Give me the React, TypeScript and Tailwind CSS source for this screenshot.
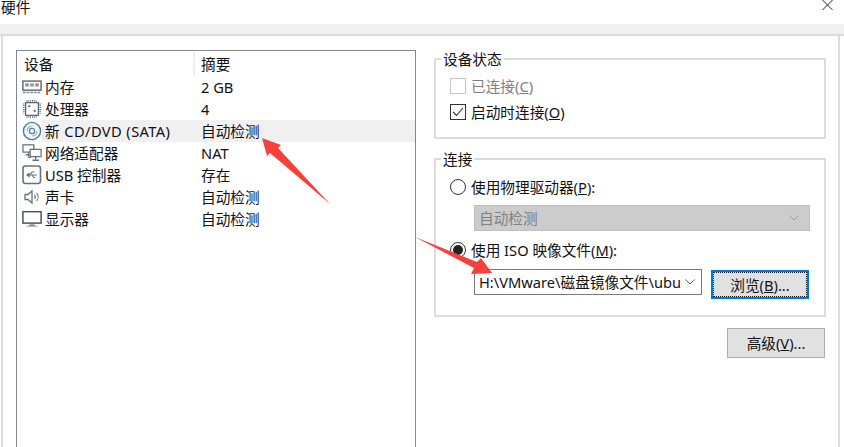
// App.tsx
const font = { fontFamily: "'Segoe UI', 'Noto Sans', 'Noto Sans CJK SC', sans-serif" };

function MemoryIcon() {
  return (
    <svg width="22" height="16" viewBox="0 0 22 16" fill="none">
      <rect x="1" y="1.5" width="20" height="10" fill="#fff" stroke="#5f6b73" strokeWidth="1.6" />
      <rect x="3.5" y="4" width="4" height="3.5" fill="#8d979e" />
      <rect x="9" y="4" width="4" height="3.5" fill="#8d979e" />
      <rect x="14.5" y="4" width="4" height="3.5" fill="#8d979e" />
      <path d="M1 14h20" stroke="#7b868d" strokeWidth="1.6" strokeDasharray="3 1" />
    </svg>
  );
}

function CpuIcon() {
  return (
    <svg width="22" height="22" viewBox="0 0 22 22" fill="none">
      <rect x="4" y="4" width="14" height="14" fill="#fff" stroke="#5f6b73" strokeWidth="1.4" />
      <rect x="7" y="7" width="2" height="2" fill="#4a555c" />
      <rect x="13" y="12" width="2" height="2" fill="#4a555c" />
      <path d="M5 2h12M5 20h12M2 5v12M20 5v12" stroke="#6d787f" strokeWidth="2" strokeDasharray="1 1" />
    </svg>
  );
}

function DiscIcon() {
  return (
    <svg width="20" height="20" viewBox="0 0 20 20" fill="none">
      <circle cx="10" cy="10" r="8.6" fill="#f4f8fb" stroke="#4f7d9c" strokeWidth="1.4" />
      <circle cx="10" cy="10" r="2.6" stroke="#5f7e93" strokeWidth="1.2" />
      <path d="M5 10a5 5 0 0 1 5-5M15 10a5 5 0 0 1-5 5" stroke="#9db3c2" strokeWidth="1.2" />
    </svg>
  );
}

function NetworkIcon() {
  return (
    <svg width="22" height="20" viewBox="0 0 22 20" fill="none">
      <rect x="1" y="1" width="12" height="8" fill="#fff" stroke="#5f6b73" strokeWidth="1.3" />
      <path d="M4 12h6" stroke="#5f6b73" strokeWidth="1.5" />
      <path d="M7 9v3M7 12v3h3" stroke="#5f6b73" />
      <rect x="9" y="6" width="12" height="8" fill="#fff" stroke="#5f6b73" strokeWidth="1.3" />
      <path d="M15 14v3M11.5 18h7" stroke="#5f6b73" strokeWidth="1.5" />
    </svg>
  );
}

function UsbIcon() {
  return (
    <svg width="20" height="20" viewBox="0 0 20 20" fill="none">
      <rect x="1" y="1" width="17.5" height="17.5" rx="2.5" fill="#fff" stroke="#66727a" strokeWidth="1.6" />
      <path d="M5 10h10M5 10l2-1.6v3.2zM8 10l2-3h2.5M10 10l1.5 2.5H13" stroke="#66727a" strokeWidth="1.1" />
    </svg>
  );
}

function SpeakerIcon() {
  return (
    <svg width="20" height="18" viewBox="0 0 20 18" fill="none">
      <path d="M3 6.5h3L10 3v12l-4-3.5H3z" fill="#fff" stroke="#66727a" strokeWidth="1.3" />
      <path d="M12.5 7a3 3 0 0 1 0 4M14.5 5a6 6 0 0 1 0 8" stroke="#7b868d" strokeWidth="1.2" />
    </svg>
  );
}

function MonitorIcon() {
  return (
    <svg width="22" height="18" viewBox="0 0 22 18" fill="none">
      <rect x="1" y="1" width="20" height="12.5" fill="#fff" stroke="#4f5b63" strokeWidth="1.7" />
      <path d="M8 15h6v1.5H8z" fill="#66727a" />
      <path d="M5 17h12" stroke="#8d979e" />
    </svg>
  );
}

const devices = [
  { icon: <MemoryIcon />, name: "内存", summary: "2 GB" },
  { icon: <CpuIcon />, name: "处理器", summary: "4" },
  { icon: <DiscIcon />, name: "新 CD/DVD (SATA)", summary: "自动检测", selected: true },
  { icon: <NetworkIcon />, name: "网络适配器", summary: "NAT" },
  { icon: <UsbIcon />, name: "USB 控制器", summary: "存在" },
  { icon: <SpeakerIcon />, name: "声卡", summary: "自动检测" },
  { icon: <MonitorIcon />, name: "显示器", summary: "自动检测" },
];

function Chevron({ color }: { color: string }) {
  return (
    <svg width="10" height="6" viewBox="0 0 10 6" fill="none">
      <path d="M0.5 0.5L5 5L9.5 0.5" stroke={color} />
    </svg>
  );
}

// annotation arrows painted over the dialog
function Arrows() {
  return (
    <svg className="absolute left-0 top-0 pointer-events-none" width="844" height="447" viewBox="0 0 844 447">
      <polygon points="262,138 281,145 278,148 330,204 270,153 267,156" fill="#f5403c" />
      <polygon points="415,237 477,262 481,258 492,273 471,274 474,268" fill="#f5403c" />
    </svg>
  );
}

export default function App() {
  return (
    <div className="relative w-[844px] h-[447px] overflow-hidden bg-white text-[14.67px] text-[#111]" style={font}>
      <div className="h-[24px] flex items-start justify-between">
        <span className="pl-[1px] leading-[15px]">硬件</span>
        <svg className="mr-[10px]" width="12" height="11" viewBox="0 0 12 11" fill="none">
          <path d="M0.5 0L10.5 10M10.5 0L0.5 10" stroke="#222" />
        </svg>
      </div>
      <div className="h-[12px] bg-[#f0f0f0] border-b-2 border-[#dcdcdc]" />

      <div className="flex ml-[1px] w-[839px] h-[412px] border-x-2 border-[#dcdcdc] bg-white">
        {/* device list */}
        <div className="ml-[13px] mt-[14px] w-[400px] h-[400px] border border-[#828790] shrink-0">
          <div className="flex h-[25px] items-center">
            <div className="w-[178px] pl-[7px] border-r-2 border-[#eeeeee] h-full flex items-center">设备</div>
            <div className="pl-[6px]">摘要</div>
          </div>
          <div>
            {devices.map((d) => (
              <div key={d.name} className="flex h-[22px] items-center">
                <div className="w-[25px] pl-[5px] flex items-center justify-start shrink-0">{d.icon}</div>
                <div className={`flex flex-1 h-full items-center ${d.selected ? "bg-[#f0f0f0]" : ""}`}>
                  <div className={`w-[158px] pl-[3px] whitespace-nowrap ${d.selected ? "tracking-[0.4px]" : ""}`}>{d.name}</div>
                  <div className="pl-[1px]">{d.summary}</div>
                </div>
              </div>
            ))}
          </div>
        </div>

        {/* right side */}
        <div className="ml-[18px] w-[392px] shrink-0">
          <fieldset className="mt-[14px] h-[89px] border-2 border-[#dcdcdc] pl-[14px]">
            <legend className="-ml-[9px] px-[2px] leading-[18px]">设备状态</legend>
            <div className="flex items-center gap-[5px] h-[22px] mt-[7px] text-[#808080]">
              <span className="w-[16px] h-[16px] border border-[#c4c4c4] bg-white" />
              <span>已连接(<span className="underline">C</span>)</span>
            </div>
            <div className="flex items-center gap-[5px] h-[22px] mt-[4px]">
              <span className="w-[16px] h-[16px] border border-[#333] flex items-center justify-center">
                <svg width="12" height="10" viewBox="0 0 12 10" fill="none">
                  <path d="M1 5l3.5 3.5L11 1" stroke="#333" strokeWidth="1.1" />
                </svg>
              </span>
              <span>启动时连接(<span className="underline">O</span>)</span>
            </div>
          </fieldset>

          <fieldset className="mt-[11px] h-[167px] border-2 border-[#dcdcdc] pl-[14px]">
            <legend className="-ml-[9px] px-[2px] leading-[18px]">连接</legend>
            <div className="flex items-center gap-[5px] h-[22px] mt-[8px]">
              <span className="w-[16px] h-[16px] rounded-full border border-[#333] bg-white" />
              <span>使用物理驱动器(<span className="underline">P</span>):</span>
            </div>
            <div className="ml-[24px] mt-[7px] w-[336px] h-[26px] bg-[#cccccc] border border-[#bfbfbf] flex items-center justify-between pl-[4px] pr-[10px] text-[#808080]">
              <span>自动检测</span>
              <Chevron color="#a0a0a0" />
            </div>
            <div className="flex items-center gap-[5px] h-[22px] mt-[8px]">
              <span className="w-[16px] h-[16px] rounded-full border border-[#333] bg-white flex items-center justify-center">
                <span className="w-[10px] h-[10px] rounded-full bg-[#222]" />
              </span>
              <span>使用 ISO 映像文件(<span className="underline">M</span>):</span>
            </div>
            <div className="flex items-start ml-[24px] mt-[8px]">
              <div className="w-[228px] h-[26px] border border-[#7a7a7a] bg-white flex items-center justify-between pl-[4px] pr-[6px] whitespace-nowrap">
                <span>H:\VMware\磁盘镜像文件\ubu</span>
                <Chevron color="#606060" />
              </div>
              <button className="ml-[9px] mt-[1px] w-[98px] h-[29px] bg-[#e1e1e1] border-2 border-[#0078d7] flex items-center justify-center outline-1 outline-dotted outline-[#111] -outline-offset-3">
                浏览(<span className="underline">B</span>)...
              </button>
            </div>
          </fieldset>

          <div className="flex justify-end mt-[11px] pr-[1px]">
            <button className="w-[98px] h-[30px] bg-[#e1e1e1] border border-[#adadad] flex items-center justify-center">
              高级(<span className="underline">V</span>)...
            </button>
          </div>
        </div>
      </div>

      <Arrows />
    </div>
  );
}
